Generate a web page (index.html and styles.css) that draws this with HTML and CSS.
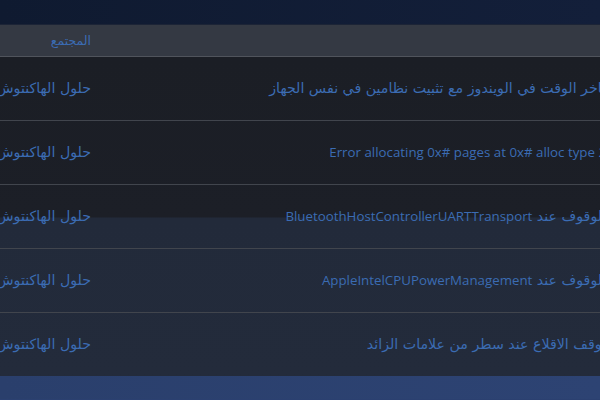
FILE: index.html
```html
<!DOCTYPE html>
<html lang="ar">
<head>
<meta charset="utf-8">
<link rel="stylesheet" href="styles.css">
</head>
<body>
<div class="topband"></div>
<div class="table">
  <div class="row head">
    <div class="cell cat" dir="rtl">المجتمع</div>
    <div class="cell title" dir="rtl"></div>
  </div>
  <div class="body">
    <div class="row item">
      <div class="cell cat" dir="rtl">حلول الهاكنتوش</div>
      <div class="cell title" dir="rtl">تاخر الوقت في الويندوز مع تثبيت نظامين في نفس الجهاز</div>
    </div>
    <div class="row item">
      <div class="cell cat" dir="rtl">حلول الهاكنتوش</div>
      <div class="cell title" dir="rtl"><span class="en">Error allocating 0x# pages at 0x# alloc type 2</span></div>
    </div>
    <div class="row item">
      <div class="cell cat" dir="rtl">حلول الهاكنتوش</div>
      <div class="cell title" dir="rtl">الوقوف عند <span class="en">BluetoothHostControllerUARTTransport</span></div>
    </div>
    <div class="row item">
      <div class="cell cat" dir="rtl">حلول الهاكنتوش</div>
      <div class="cell title" dir="rtl">الوقوف عند <span class="en">AppleIntelCPUPowerManagement</span></div>
    </div>
    <div class="row item last">
      <div class="cell cat" dir="rtl">حلول الهاكنتوش</div>
      <div class="cell title" dir="rtl">توقف الاقلاع عند سطر من علامات الزائد</div>
    </div>
  </div>
</div>
<div class="bottomband"></div>
</body>
</html>
```
FILE: styles.css
```css
html, body {
  margin: 0;
  padding: 0;
  height: 400px;
  overflow: hidden;
}
body {
  background: #2b4070;
  font-family: "DejaVu Sans", sans-serif;
  color: #3b6cb3;
  width: 600px;
}
.topband {
  height: 25px;
  background: linear-gradient(90deg, #0f1a30, #131f3a);
  border-bottom: 1px solid #1c2436;
  box-sizing: border-box;
}
.table {
  width: 606px;
}
.row {
  display: flex;
  align-items: center;
}
.cell {
  white-space: nowrap;
  text-align: right;
}
.cat {
  width: 91px;
  flex: none;
}
.title {
  flex: 1;
}
.en {
  font-family: "Open Sans", sans-serif;
  font-size: 13.3px;
}
.head {
  height: 32px;
  background: #343943;
  border-bottom: 1px solid #50545c;
  box-sizing: border-box;
  font-size: 12.5px;
}
.body {
  background: linear-gradient(180deg, #1b1e25 0, #1c1f27 160px, #222a3a 161px, #232b3b 100%);
}
.item {
  height: 64px;
  border-bottom: 1px solid #41454d;
  font-size: 14.2px;
  padding-bottom: 2px;
  box-sizing: border-box;
}
.item.last {
  border-bottom: none;
  height: 63px;
}
.bottomband {
  height: 23px;
  background: linear-gradient(90deg, #2a3f6c, #2d4373);
}
```
